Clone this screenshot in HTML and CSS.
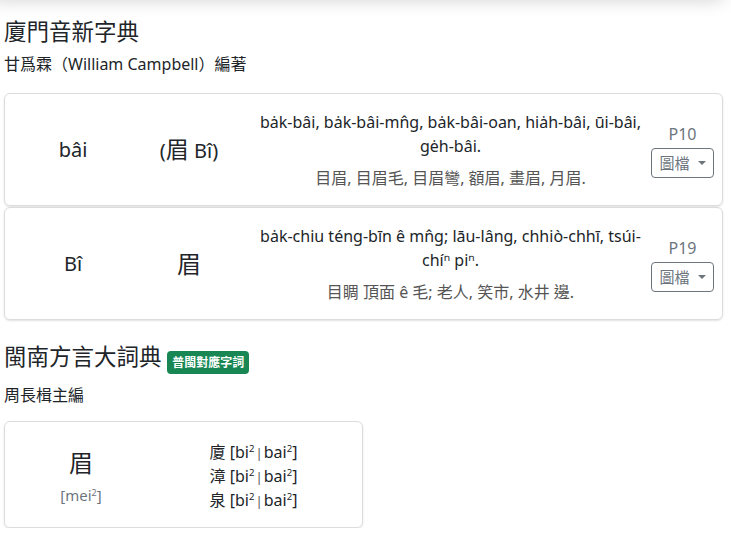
FILE: index.html
```html
<!DOCTYPE html>
<html lang="zh-Hant">
<head>
<meta charset="utf-8">
<link rel="stylesheet" href="styles.css">
</head>
<body>
<div class="topbar"></div>
<main class="page">
  <section class="dict">
    <h4 class="dict-title">廈門音新字典</h4>
    <p class="dict-author">甘爲霖（William Campbell）編著</p>

    <div class="entry">
      <div class="e-word">bâi</div>
      <div class="e-head">(<span class="han">眉</span> Bî)</div>
      <div class="e-def">
        <div class="e-rom">bȧk-bâi, bȧk-bâi-mn̂g, bȧk-bâi-oan, hiȧh-bâi, ūi-bâi, gėh-bâi.</div>
        <div class="e-han">目眉, 目眉毛, 目眉彎, 額眉, 畫眉, 月眉.</div>
      </div>
      <div class="e-page">
        <div class="page-no">P10</div>
        <button class="img-btn">圖檔<span class="caret"></span></button>
      </div>
    </div>

    <div class="entry">
      <div class="e-word">Bî</div>
      <div class="e-head big">眉</div>
      <div class="e-def">
        <div class="e-rom">bȧk-chiu téng-bīn ê mn̂g; lāu-lâng, chhiò-chhī, tsúi-chíⁿ piⁿ.</div>
        <div class="e-han">目睭 頂面 ê 毛; 老人, 笑市, 水井 邊.</div>
      </div>
      <div class="e-page">
        <div class="page-no">P19</div>
        <button class="img-btn">圖檔<span class="caret"></span></button>
      </div>
    </div>
  </section>

  <section class="dict second">
    <h4 class="dict-title">閩南方言大詞典 <span class="badge">普閩對應字詞</span></h4>
    <p class="dict-author">周長楫主編</p>

    <div class="card-small">
      <div class="cs-left">
        <div class="cs-char">眉</div>
        <div class="cs-pron">[mei<sup>2</sup>]</div>
      </div>
      <div class="cs-right">
        <div>廈 [bi<sup>2</sup><span class="sep">|</span>bai<sup>2</sup>]</div>
        <div>漳 [bi<sup>2</sup><span class="sep">|</span>bai<sup>2</sup>]</div>
        <div>泉 [bi<sup>2</sup><span class="sep">|</span>bai<sup>2</sup>]</div>
      </div>
    </div>
  </section>
</main>
</body>
</html>
```

FILE: styles.css
```css
* { box-sizing: border-box; }
html, body { margin: 0; padding: 0; background: #fff; }
body {
  font-family: "Noto Sans", "Noto Sans CJK TC", sans-serif;
  font-size: 16px;
  line-height: 1.5;
  color: #212529;
}
.topbar {
  position: fixed;
  top: -40px;
  left: -10px;
  right: 8px;
  height: 40px;
  background: #fff;
  box-shadow: 0 0 18px rgba(0,0,0,0.18);
}
.page {
  padding: 18px 8px 0 4px;
}
.dict-title {
  margin: 0 0 7px;
  font-size: 22.5px;
  font-weight: 400;
  line-height: 1.2;
}
.dict-author {
  margin: 0 0 17px;
  font-size: 16px;
}
.entry {
  display: grid;
  grid-template-columns: 136px 96px 1fr 70px;
  align-items: center;
  min-height: 113px;
  border: 1px solid #dcdcdc;
  border-radius: 6px;
  box-shadow: 0 1px 2px rgba(0,0,0,0.12);
  margin-bottom: 1px;
  padding: 15px 4px 15px 0;
  text-align: center;
}
.e-word { font-size: 20px; }
.e-head { font-size: 20px; }
.e-head .han { font-size: 23px; }
.e-head.big { font-size: 24px; }
.e-def {
  padding: 0 4px 0 20px;
  font-size: 16px;
}
.e-rom { line-height: 24px; }
.e-han { color: #555; margin-top: 8px; line-height: 24px; }
.e-page {
  display: flex;
  flex-direction: column;
  align-items: center;
  gap: 2px;
  color: #6c757d;
  font-size: 16px;
  padding-right: 1px;
}
.img-btn {
  font-family: inherit;
  font-size: 15px;
  color: #6c757d;
  background: #fff;
  border: 1px solid #6c757d;
  border-radius: 4px;
  padding: 3px 7px;
  line-height: 22px;
  display: flex;
  align-items: center;
  gap: 8px;
}
.caret {
  width: 0; height: 0;
  border-left: 4px solid transparent;
  border-right: 4px solid transparent;
  border-top: 4px solid #6c757d;
}
.second { margin-top: 23px; }
.second .dict-title { margin-bottom: 9px; }
.second .dict-author { margin-bottom: 14px; }
.badge {
  display: inline-block;
  background: #198754;
  color: #fff;
  font-size: 12px;
  font-weight: 700;
  line-height: 1;
  padding: 6px 5px 5px;
  border-radius: 4px;
  vertical-align: -2px;
}
.card-small {
  width: 359px;
  display: grid;
  grid-template-columns: 152px 1fr;
  align-items: center;
  border: 1px solid #dcdcdc;
  border-radius: 6px;
  box-shadow: 0 1px 2px rgba(0,0,0,0.12);
  padding: 19px 0 14px;
  text-align: center;
}
.cs-char { font-size: 24px; line-height: 42px; margin-top: -6px; }
.cs-pron { color: #6c757d; font-size: 15px; }
.cs-right { font-size: 16px; line-height: 23px; padding-right: 12px; }
sup { font-size: 0.6em; line-height: 0; vertical-align: 0.6em; }
.sep { color: #555; font-size: 13px; padding: 0 1px; }
```
